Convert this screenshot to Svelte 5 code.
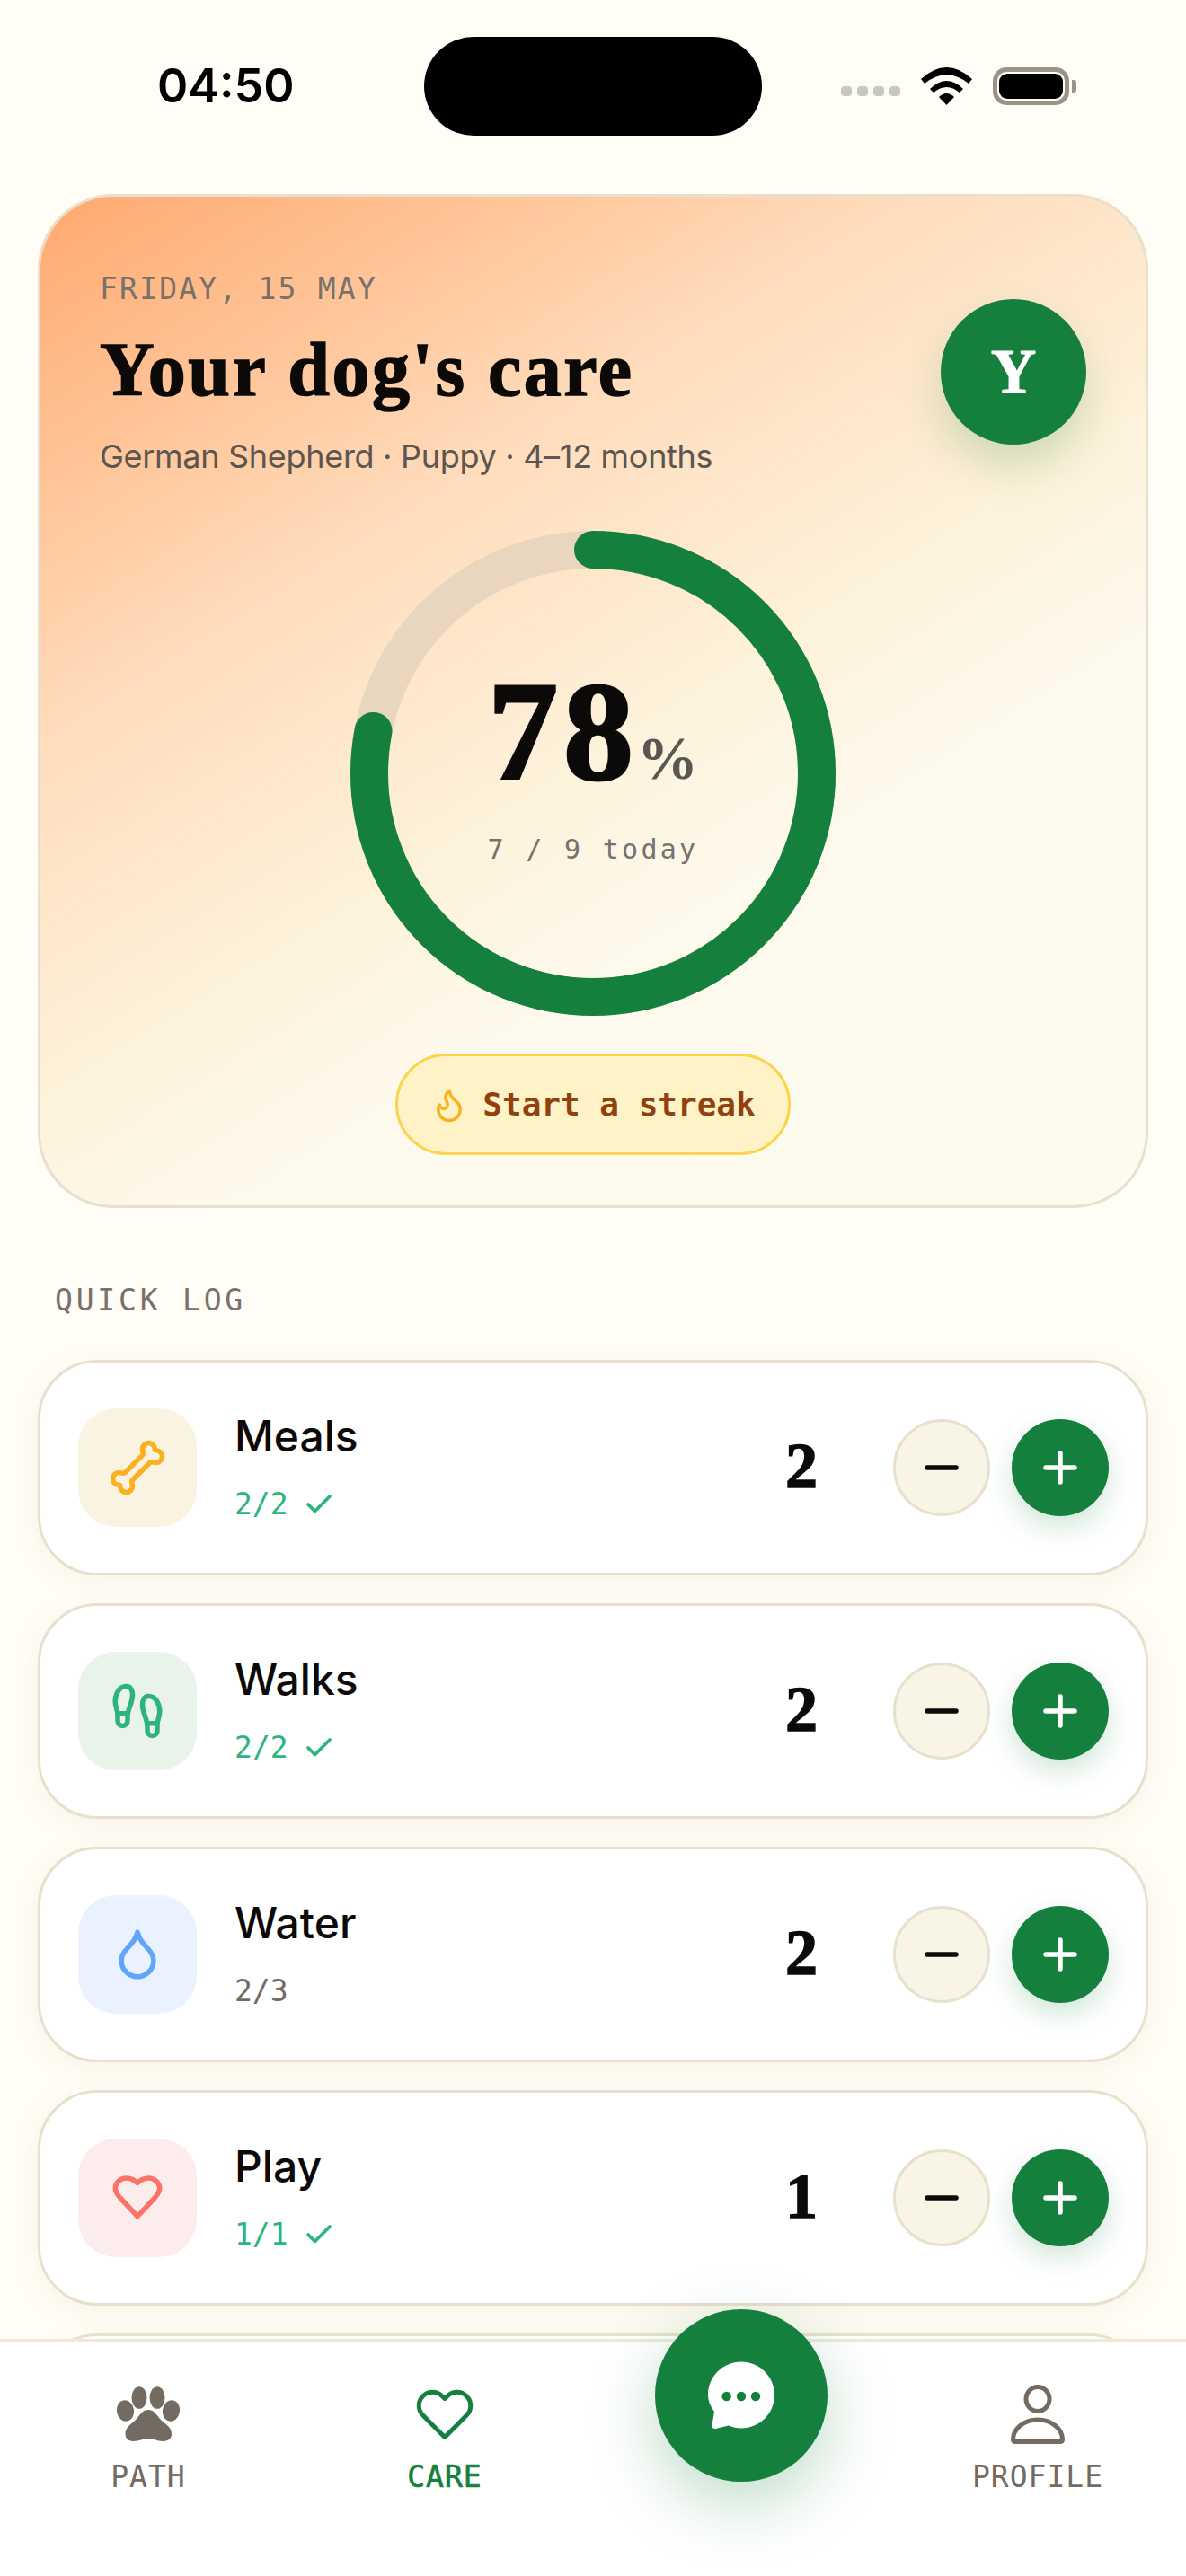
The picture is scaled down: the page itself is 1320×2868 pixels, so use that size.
<script lang="ts">
	// Daily care screen: hero ring plus the quick log counters
	const logs = [
		{ name: 'Meals', tone: 'amber', done: '2/2', ok: true, count: 2 },
		{ name: 'Walks', tone: 'green', done: '2/2', ok: true, count: 2 },
		{ name: 'Water', tone: 'blue', done: '2/3', ok: false, count: 2 },
		{ name: 'Play', tone: 'red', done: '1/1', ok: true, count: 1 }
	];

	const R = 249;
	const circumference = 2 * Math.PI * R;
	const pct = 78;
	const dash = (circumference * pct) / 100;
</script>

<div class="phone">
	<header class="status">
		<span class="time">04:50</span>
		<div class="island"></div>
		<div class="sys">
			<div class="signal"><i></i><i></i><i></i><i></i></div>
			<svg class="wifi" width="57" height="42" viewBox="0 0 57 42" fill="#000">
				<path d="M0 13Q28.5 -13 57 13L53 18Q28.5 -1.4 4 18Z" />
				<path d="M10 24Q28.5 6 47 24L43 28Q28.5 16 14 28Z" />
				<path d="M20 33Q28.5 25 37 33L28.5 42Z" />
			</svg>
			<div class="battery"><div class="level"></div></div>
			<div class="nub"></div>
		</div>
	</header>

	<main class="content">
		<section class="hero">
			<div class="hero-head">
				<div class="hero-text">
					<div class="date">FRIDAY, 15 MAY</div>
					<h1>Your dog's care</h1>
					<p>German Shepherd · Puppy · 4–12 months</p>
				</div>
				<div class="avatar">Y</div>
			</div>

			<div class="ring">
				<svg width="540" height="540" viewBox="0 0 540 540">
					<circle cx="270" cy="270" r={R} fill="none" stroke="#e8d6be" stroke-width="42" />
					<circle
						cx="270"
						cy="270"
						r={R}
						fill="none"
						stroke="#15803d"
						stroke-width="42"
						stroke-linecap="round"
						stroke-dasharray="{dash} {circumference}"
						transform="rotate(-90 270 270)"
					/>
				</svg>
				<div class="ring-label">
					<div class="pct">{pct}<span>%</span></div>
					<div class="today">7 / 9 today</div>
				</div>
			</div>

			<div class="streak">
				<svg width="42" height="42" viewBox="0 0 24 24" fill="none" stroke="#fbb01f" stroke-width="2" stroke-linecap="round" stroke-linejoin="round">
					<path d="M8.5 14.5A2.5 2.5 0 0 0 11 12c0-1.38-.5-2-1-3-1.072-2.143-.224-4.054 2-6 .5 2.5 2 4.9 4 6.5 2 1.6 3 3.5 3 5.5a7 7 0 1 1-14 0c0-1.153.433-2.294 1-3a2.5 2.5 0 0 0 2.5 2.5z" />
				</svg>
				<span>Start a streak</span>
			</div>
		</section>

		<h2>QUICK LOG</h2>

		<div class="logs">
			{#each logs as log}
				<div class="card">
					<div class="tile {log.tone}">
						<svg width="66" height="66" viewBox="0 0 24 24" fill="none" stroke="currentColor" stroke-width="2" stroke-linecap="round" stroke-linejoin="round">
							{#if log.tone === 'amber'}
								<path d="M17 10c.7-.7 1.69 0 2.5 0a2.5 2.5 0 1 0 0-5 .5.5 0 0 1-.5-.5 2.5 2.5 0 1 0-5 0c0 .81.7 1.8 0 2.5l-7 7c-.7.7-1.69 0-2.5 0a2.5 2.5 0 0 0 0 5c.28 0 .5.22.5.5a2.5 2.5 0 1 0 5 0c0-.81-.7-1.8 0-2.5Z" />
							{:else if log.tone === 'green'}
								<path d="M4 16v-2.38C4 11.5 2.97 10.5 3 8c.03-2.72 1.49-6 4.5-6C9.37 2 10 3.8 10 5.5c0 3.11-2 5.66-2 8.68V16a2 2 0 1 1-4 0Z" />
								<path d="M20 20v-2.38c0-2.12 1.03-3.12 1-5.62-.03-2.72-1.49-6-4.5-6C14.63 6 14 7.8 14 9.5c0 3.11 2 5.66 2 8.68V20a2 2 0 1 0 4 0Z" />
								<path d="M16 17h4" />
								<path d="M4 13h4" />
							{:else if log.tone === 'blue'}
								<path d="M12 21a6.5 6.5 0 0 0 6.5-6.5c0-1.9-1-3.6-2.6-5.2S12.6 5.5 12 3c-.6 2.5-2.3 4.7-3.9 6.3S5.500 12.600 5.500 14.500A6.500 6.500 0 0 0 12 21z" />
							{:else}
								<path d="M12 19.500L5 12C3.500 10.300 3 9.200 3 8A4.500 4.500 0 0 1 7.500 4C9.300 4 10.800 4.800 12 6C13.200 4.800 14.700 4 16.500 4A4.500 4.500 0 0 1 21 8C21 9.200 20.500 10.300 19 12Z" />
							{/if}
						</svg>
					</div>
					<div class="info">
						<div class="name">{log.name}</div>
						<div class="done" class:ok={log.ok}>
							<span>{log.done}</span>
							{#if log.ok}
								<svg width="36" height="36" viewBox="0 0 24 24" fill="none" stroke="currentColor" stroke-width="2.5" stroke-linecap="round" stroke-linejoin="round">
									<polyline points="20 6 9 17 4 12" />
								</svg>
							{/if}
						</div>
					</div>
					<div class="count">{log.count}</div>
					<div class="btn minus">
						<svg width="48" height="48" viewBox="0 0 48 48" stroke="#0c0a09" stroke-width="5.500" stroke-linecap="round"><path d="M8 24H40" /></svg>
					</div>
					<div class="btn plus">
						<svg width="48" height="48" viewBox="0 0 48 48" stroke="#fff" stroke-width="5.500" stroke-linecap="round"><path d="M8 24H40M24 8V40" /></svg>
					</div>
				</div>
			{/each}
			<div class="card"></div>
		</div>
	</main>

	<nav class="tabs">
		<div class="tab">
			<svg width="72" height="66" viewBox="0 -2 72 66" fill="#736a62">
				<ellipse cx="10.500" cy="27" rx="9.500" ry="11.800" transform="rotate(-10 10.500 27)" />
				<ellipse cx="26" cy="12.500" rx="8.500" ry="12.300" />
				<ellipse cx="46" cy="12.500" rx="8.500" ry="12.300" />
				<ellipse cx="61.500" cy="27" rx="9.500" ry="11.800" transform="rotate(10 61.500 27)" />
				<path d="M36 26C42 26 45 31 49 36C53 41 62 44 62 53C62 59 57 61 52 61C46 61 42 58 36 58C30 58 26 61 20 61C15 61 10.500 59 10.500 53C10.500 44 19 41 23 36C27 31 30 26 36 26Z" />
			</svg>
			<span>PATH</span>
		</div>
		<div class="tab active">
			<svg width="66" height="66" viewBox="0 0 24 24" fill="none" stroke="#15803d" stroke-width="1.800" stroke-linecap="round" stroke-linejoin="round">
				<path d="M20.840 4.610a5.500 5.500 0 0 0-7.780 0L12 5.670l-1.060-1.060a5.500 5.500 0 0 0-7.780 7.780l1.060 1.060L12 21.230l7.780-7.780 1.060-1.060a5.500 5.500 0 0 0 0-7.780z" />
			</svg>
			<span>CARE</span>
		</div>
		<div class="tab fab-slot">
			<div class="fab">
				<svg width="76" height="76" viewBox="0 0 76 76">
					<path fill="#fff" d="M38 .5C58.500 .5 75 17 75 37.500C75 58 58.500 74.500 38 74.500C33 74.500 28.500 73.500 24 71.500L9.500 75C7 75.500 5 73.500 5.500 71L8 56C3.500 50 1 44 1 37.500C1 17 17.500 .5 38 .5Z" />
					<circle cx="21.600" cy="39" r="5.200" fill="#15803d" />
					<circle cx="38" cy="39" r="5.200" fill="#15803d" />
					<circle cx="54" cy="39" r="5.200" fill="#15803d" />
				</svg>
			</div>
		</div>
		<div class="tab">
			<svg width="66" height="66" viewBox="0 0 66 66" fill="none" stroke="#736a62" stroke-width="5" stroke-linejoin="round">
				<ellipse cx="33" cy="16" rx="13" ry="13.500" />
				<path d="M5.500 61A27.500 22 0 0 1 60.500 61Q60.500 63.500 58 63.500H8Q5.500 63.500 5.500 61Z" />
			</svg>
			<span>PROFILE</span>
		</div>
	</nav>
</div>

<style>
	:global(body) {
		margin: 0;
		background: #fffdf5;
	}

	.phone {
		position: relative;
		width: 1320px;
		height: 2868px;
		overflow: hidden;
		background: #fffdf5;
		color: #0c0a09;
		font-family: Inter, 'Liberation Sans', sans-serif;
	}

	.status {
		display: grid;
		grid-template-columns: 472px 376px 1fr;
		align-items: center;
		height: 110px;
		padding-top: 41px;
	}

	.time {
		padding-left: 175px;
		font-size: 52px;
		font-weight: 600;
		line-height: 60px;
		color: #000;
	}

	.island {
		height: 110px;
		border-radius: 55px;
		background: #000;
	}

	.sys {
		display: flex;
		align-items: center;
		justify-content: flex-end;
		padding-right: 122px;
	}

	.signal {
		display: flex;
		gap: 6px;
		align-self: flex-end;
		margin: 0 23px 10px 0;
	}

	.signal i {
		width: 12px;
		height: 11px;
		border-radius: 4px;
		background: #c5cabb;
	}

	.wifi {
		margin-right: 23px;
	}

	.battery {
		box-sizing: border-box;
		width: 85px;
		height: 42px;
		padding: 2px;
		border: 5px solid #9a9488;
		border-radius: 15px;
	}

	.level {
		height: 100%;
		border-radius: 9px;
		background: #000;
	}

	.nub {
		width: 5px;
		height: 14px;
		margin-left: 3px;
		border-radius: 0 3px 3px 0;
		background: #999488;
	}

	.content {
		padding: 65px 42px 0;
	}

	.hero {
		display: flex;
		flex-direction: column;
		align-items: center;
		box-sizing: border-box;
		height: 1129px;
		padding: 83px 66px 0;
		border: 3px solid #e8e0cc;
		border-radius: 84px;
		background: linear-gradient(148deg, #ffa96e 0%, #ffdcbc 32%, #fdf3dc 54%, #fdf9ec 66%, #fdfaef 100%);
	}

	.hero-head {
		display: flex;
		align-items: center;
		justify-content: space-between;
		align-self: stretch;
	}

	.date {
		font-family: 'DejaVu Sans Mono', monospace;
		font-size: 33px;
		line-height: 40px;
		letter-spacing: 2.200px;
		color: #78716c;
	}

	h1 {
		margin: 20px 0 0;
		font-family: 'Liberation Serif', serif;
		font-size: 84px;
		font-weight: 700;
		line-height: 100px;
		letter-spacing: 2.500px;
		-webkit-text-stroke: 1.500px #0c0a09;
	}

	.hero-text p {
		margin: 24px 0 0;
		font-size: 36px;
		line-height: 44px;
		letter-spacing: -0.300px;
		color: #5c5650;
	}

	.avatar {
		display: flex;
		align-items: center;
		justify-content: center;
		width: 162px;
		height: 162px;
		margin-bottom: 4px;
		border-radius: 50%;
		background: #15803d;
		box-shadow: 0 24px 48px rgba(21, 128, 61, 0.2);
		font-family: 'Liberation Serif', serif;
		font-size: 70px;
		font-weight: 700;
		color: #fff;
		-webkit-text-stroke: 1px #fff;
	}

	.ring {
		position: relative;
		width: 540px;
		height: 540px;
		margin-top: 61px;
	}

	.ring svg {
		display: block;
	}

	.ring-label {
		position: absolute;
		top: 0;
		left: 0;
		right: 0;
		bottom: 0;
		text-align: center;
	}

	.pct {
		margin-top: 140px;
		font-family: 'Liberation Serif', serif;
		font-size: 156px;
		font-weight: 700;
		line-height: 168px;
		letter-spacing: 6px;
		-webkit-text-stroke: 3px #0c0a09;
	}

	.pct span {
		margin-left: -2px;
		font-size: 68px;
		letter-spacing: 0;
		color: #5c5650;
		-webkit-text-stroke: 0;
	}

	.today {
		font-family: 'DejaVu Sans Mono', monospace;
		font-size: 30px;
		line-height: 36px;
		letter-spacing: 3.300px;
		color: #78716c;
	}

	.streak {
		display: flex;
		align-items: center;
		justify-content: center;
		gap: 16px;
		box-sizing: border-box;
		width: 440px;
		height: 113px;
		margin-top: 42px;
		border: 3px solid #fcd34d;
		border-radius: 57px;
		background: #fef3c7;
		font-family: 'DejaVu Sans Mono', monospace;
		font-size: 36px;
		font-weight: 700;
		color: #92400e;
	}

	h2 {
		margin: 83px 0 0 19px;
		font-family: 'DejaVu Sans Mono', monospace;
		font-size: 33px;
		font-weight: 400;
		line-height: 40px;
		letter-spacing: 3.800px;
		color: #78716c;
	}

	.logs {
		display: flex;
		flex-direction: column;
		gap: 31px;
		margin-top: 46px;
	}

	.card {
		display: flex;
		align-items: center;
		box-sizing: border-box;
		height: 240px;
		padding: 0 41px 0 42px;
		border: 3px solid #e8e0cc;
		border-radius: 66px;
		background: #fff;
		box-shadow: 0 6px 30px rgba(140, 120, 60, 0.07);
	}

	.tile {
		display: flex;
		align-items: center;
		justify-content: center;
		flex: none;
		width: 132px;
		height: 132px;
		border-radius: 42px;
	}

	.tile.amber {
		background: #fbf3e2;
		color: #fbb01f;
	}

	.tile.green {
		background: #e8f3ea;
		color: #2db47d;
	}

	.tile.blue {
		background: #e9f2fe;
		color: #60a5fa;
	}

	.tile.red {
		background: #fdecec;
		color: #fb7268;
	}

	.info {
		flex: 1;
		margin-top: -4px;
		margin-left: 42px;
	}

	.name {
		font-size: 48px;
		font-weight: 500;
		line-height: 58px;
	}

	.done {
		display: flex;
		align-items: center;
		gap: 16px;
		height: 40px;
		margin-top: 27px;
		font-family: 'DejaVu Sans Mono', monospace;
		font-size: 33px;
		color: #736a62;
	}

	.done.ok {
		color: #2db47d;
	}

	.count {
		width: 80px;
		margin-top: -4px;
		margin-right: 62px;
		font-family: 'Liberation Serif', serif;
		font-size: 72px;
		font-weight: 700;
		line-height: 84px;
		text-align: center;
		-webkit-text-stroke: 1.500px #0c0a09;
	}

	.btn {
		display: flex;
		align-items: center;
		justify-content: center;
		flex: none;
		box-sizing: border-box;
		width: 108px;
		height: 108px;
		border-radius: 50%;
	}

	.minus {
		border: 3px solid #e8e0cc;
		background: #f8f4e6;
	}

	.plus {
		margin-left: 24px;
		background: #15803d;
		box-shadow: 0 12px 30px rgba(21, 128, 61, 0.2);
	}

	.tabs {
		position: absolute;
		left: 0;
		right: 0;
		bottom: 0;
		display: grid;
		grid-template-columns: repeat(4, 1fr);
		box-sizing: border-box;
		height: 264px;
		border-top: 3px solid #efe9d8;
		background: #fff;
	}

	.tab {
		display: flex;
		flex-direction: column;
		align-items: center;
		padding-top: 48px;
		font-family: 'DejaVu Sans Mono', monospace;
		font-size: 33px;
		font-weight: 400;
		line-height: 36px;
		letter-spacing: 1px;
		color: #736a62;
	}

	.tab svg {
		display: block;
	}

	.tab span {
		margin-top: 19px;
	}

	.tab.active {
		color: #15803d;
		-webkit-text-stroke: 0.700px #15803d;
	}

	.fab-slot {
		padding-top: 0;
	}

	.fab {
		display: flex;
		align-items: center;
		justify-content: center;
		flex: none;
		width: 192px;
		height: 192px;
		margin-top: -36px;
		border-radius: 50%;
		background: #15803d;
		box-shadow: 0 24px 72px rgba(21, 128, 61, 0.28);
	}
</style>
